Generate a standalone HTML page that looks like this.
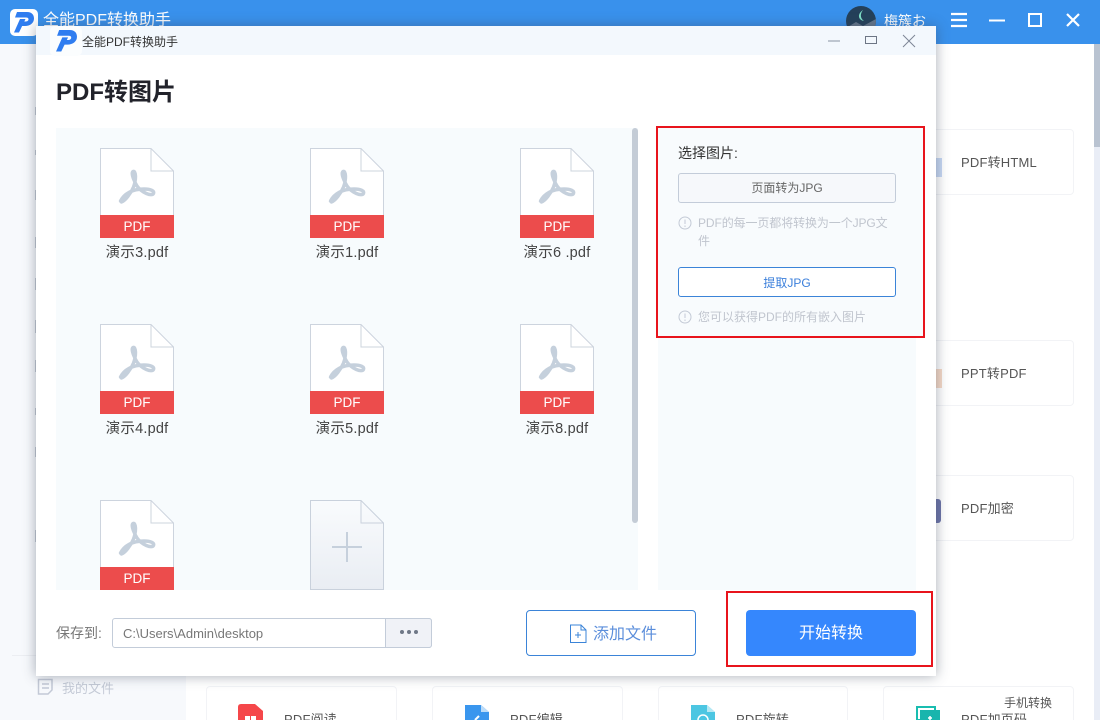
<!DOCTYPE html>
<html lang="zh"><head><meta charset="utf-8"><title>全能PDF转换助手</title>
<style>
*{box-sizing:border-box;margin:0;padding:0}
html,body{width:1100px;height:720px;overflow:hidden;background:#fff}
body{position:relative;font-family:"Liberation Sans","Noto Sans CJK SC",sans-serif;color:#333}
.a{position:absolute;white-space:nowrap}
.card{position:absolute;background:#fff;border:1px solid #f2f3f6;border-radius:4px}
.cardt{position:absolute;font-size:13px;letter-spacing:.2px;color:#555;line-height:16px;white-space:nowrap}
.fname{position:absolute;font-size:14.500px;letter-spacing:.2px;color:#444;line-height:18px;width:150px;text-align:center;white-space:nowrap}
.file{position:absolute;width:74px;height:90px}
.tick{position:absolute;left:35px;width:1px;background:#c2c8d2}
.pdf{position:absolute;width:74px;height:23px;text-align:center;color:#fff;font-size:13.500px;line-height:23px}
</style></head><body>
<div class="a" style="left:0;top:0;width:1100px;height:44px;background:#3991ec"></div>
<div class="a" style="left:0;top:44px;width:186px;height:676px;background:#f7f9fc"></div>
<div class="a" style="left:12px;top:655px;width:174px;height:1px;background:#eceef2"></div>
<div class="a" style="left:1094px;top:44px;width:6px;height:676px;background:#e9edf6"></div>
<div class="a" style="left:1094px;top:44px;width:6px;height:103px;background:#b9c3d1"></div>
<div class="tick" style="top:107px;height:8px"></div>
<div class="tick" style="top:150px;height:5px"></div>
<div class="tick" style="top:190px;height:10px"></div>
<div class="tick" style="top:237px;height:11px"></div>
<div class="tick" style="top:278px;height:12px"></div>
<div class="tick" style="top:320px;height:13px"></div>
<div class="tick" style="top:360px;height:12px"></div>
<div class="tick" style="top:408px;height:7px"></div>
<div class="tick" style="top:447px;height:10px"></div>
<div class="tick" style="top:530px;height:12px"></div>

<div class="a" style="left:10px;top:9px;width:28px;height:27px;background:#fff;border-radius:5px"></div>
<svg class="a" style="left:14px;top:12px" width="20" height="21" viewBox="0 0 20 21"><path d="M3 0H13C18 0 20 3 20 6.500C20 11 16 14 11 14H7L9.500 9.500H12C13.500 9.500 14.500 8.500 14.500 7.300C14.500 6 13.500 5.500 12 5.500H1Z" fill="#2f7df0"/><path d="M6 7H11.500L5 20.500H0Z" fill="#2f7df0"/></svg>
<div class="a" style="left:43px;top:11px;font-size:16px;line-height:20px;color:#fff">全能PDF转换助手</div>

<svg class="a" style="left:846px;top:6px" width="30" height="30" viewBox="0 0 30 30"><defs><clipPath id="av"><circle cx="15" cy="15" r="15"/></clipPath></defs><g clip-path="url(#av)"><rect width="30" height="30" fill="#24405a"/><path d="M0 22L10 16L17 20L30 13V30H0Z" fill="#65778c"/><path d="M17 4C11 8 12 14 18 15C14 12 14 8 17 4Z" fill="#7fe0c8"/></g></svg>
<div class="a" style="left:884px;top:11px;font-size:14px;line-height:20px;color:#fff">梅簇お</div>
<svg class="a" style="left:950px;top:12px" width="18" height="16"><path d="M1 2H17M1 8H17M1 14H17" stroke="#fff" stroke-width="2.200"/></svg>
<svg class="a" style="left:988px;top:12px" width="18" height="16"><path d="M1 8.500H17" stroke="#fff" stroke-width="2"/></svg>
<svg class="a" style="left:1027px;top:12px" width="16" height="16"><rect x="2" y="2" width="12" height="12" fill="none" stroke="#fff" stroke-width="2"/></svg>
<svg class="a" style="left:1065px;top:12px" width="16" height="16"><path d="M2 2L14 14M14 2L2 14" stroke="#fff" stroke-width="2.200"/></svg>

<div class="card" style="left:900px;top:129px;width:174px;height:66px"></div>
<div class="cardt" style="left:961px;top:155px">PDF转HTML</div>
<div class="card" style="left:900px;top:340px;width:174px;height:66px"></div>
<div class="cardt" style="left:961px;top:366px">PPT转PDF</div>
<div class="card" style="left:900px;top:475px;width:174px;height:66px"></div>
<div class="cardt" style="left:961px;top:501px">PDF加密</div>
<div class="a" style="left:936px;top:158px;width:6px;height:19px;background:#c7d8f3"></div>
<div class="a" style="left:936px;top:369px;width:6px;height:19px;background:#f6d9c6"></div>
<div class="a" style="left:936px;top:499px;width:5px;height:24px;background:#6c74a8;border-radius:0 3px 3px 0"></div>

<svg class="a" style="left:37px;top:678px" width="17" height="18"><path d="M1.500 1.500H15V12L11 16H1.500ZM5 6H12M5 10H12" fill="none" stroke="#c3c9d6" stroke-width="1.500"/></svg>
<div class="a" style="left:62px;top:680px;font-size:13px;line-height:18px;color:#c4cad6">我的文件</div>

<div class="card" style="left:206px;top:686px;width:191px;height:60px"></div>
<div class="card" style="left:432px;top:686px;width:191px;height:60px"></div>
<div class="card" style="left:658px;top:686px;width:190px;height:60px"></div>
<div class="card" style="left:883px;top:686px;width:191px;height:60px"></div>
<svg class="a" style="left:238px;top:704px" width="25" height="16"><path d="M3 0H17L25 7V16H0V3Q0 0 3 0Z" fill="#f5474a"/><path d="M7 12H12V16H7ZM13 12H18V16H13Z" fill="#fff"/></svg>
<svg class="a" style="left:465px;top:705px" width="24" height="15"><path d="M0 0H16L24 7V15H0Z" fill="#3a96ee"/><path d="M16 0L24 7H16Z" fill="#bcdcf8"/><path d="M10 15L14 11" stroke="#fff" stroke-width="2"/></svg>
<svg class="a" style="left:691px;top:705px" width="24" height="15"><path d="M0 0H16L24 7V15H0Z" fill="#4cc6e2"/><path d="M16 0L24 7H16Z" fill="#b6e9f4"/><circle cx="12" cy="15" r="5" fill="none" stroke="#fff" stroke-width="1.500"/></svg>
<svg class="a" style="left:916px;top:706px" width="24" height="14"><rect x="1" y="1" width="18" height="13" fill="none" stroke="#19bdb0" stroke-width="2"/><rect x="4" y="4" width="20" height="10" fill="#19b5ad"/><path d="M14 10V14M12 12H16" stroke="#fff" stroke-width="1.500"/></svg>
<div class="cardt" style="left:284px;top:712px">PDF阅读</div>
<div class="cardt" style="left:510px;top:712px">PDF编辑</div>
<div class="cardt" style="left:736px;top:712px">PDF旋转</div>
<div class="cardt" style="left:961px;top:712px">PDF加页码</div>
<div class="a" style="left:1004px;top:695px;font-size:12px;line-height:16px;color:#555">手机转换</div>

<!-- dialog -->
<div class="a" style="left:36px;top:26px;width:900px;height:650px;background:#fff;box-shadow:0 0 12px rgba(60,70,90,.45)"></div>
<div class="a" style="left:36px;top:26px;width:900px;height:29px;background:#f3f8fd"></div>
<div class="a" style="left:50px;top:26px;width:32px;height:30px;background:#fbfdfe;border-radius:5px"></div>
<svg class="a" style="left:56px;top:30px" width="21" height="22" viewBox="0 0 20 21"><path d="M3 0H13C18 0 20 3 20 6.500C20 11 16 14 11 14H7L9.500 9.500H12C13.500 9.500 14.500 8.500 14.500 7.300C14.500 6 13.500 5.500 12 5.500H1Z" fill="#2f7df0"/><path d="M6 7H11.500L5 20.500H0Z" fill="#2f7df0"/></svg>
<div class="a" style="left:82px;top:33px;font-size:12px;line-height:18px;color:#333">全能PDF转换助手</div>
<svg class="a" style="left:827px;top:33px" width="14" height="14"><path d="M1 8H13" stroke="#8a93a3" stroke-width="1"/></svg>
<svg class="a" style="left:864px;top:35px" width="14" height="11"><rect x="1.500" y="1.500" width="11" height="7" fill="none" stroke="#6d7685" stroke-width="1"/></svg>
<svg class="a" style="left:902px;top:34px" width="14" height="14"><path d="M1 1L13 13M13 1L1 13" stroke="#7d8696" stroke-width="1"/></svg>
<div class="a" style="left:56px;top:77px;font-size:24px;line-height:32px;font-weight:700;color:#22232b">PDF转图片</div>

<div class="a" style="left:56px;top:128px;width:582px;height:462px;background:#f7fbfd"></div>
<div class="a" style="left:632px;top:128px;width:6px;height:395px;background:#c4ccd6;border-radius:3px"></div>
<div class="a" style="left:658px;top:128px;width:258px;height:462px;background:#f7fbfd"></div>

<svg width="0" height="0" style="position:absolute"><defs>
<symbol id="f" viewBox="0 0 74 90"><path d="M.5 .5H51L73.500 23V89.500H.5Z" fill="#fff" stroke="#cdd4de"/><path d="M51 .5V23H73.500" fill="none" stroke="#cdd4de"/>
<path d="M20.500 53C24 46 32 41 44 41C51 41 54.500 43 53.500 45.500C51.500 48.500 42 45 37 38C33 31 31 25 33 23.500C36 22.500 36.500 31 33.500 39C30.500 46 25 53 21.500 54Z" fill="none" stroke="#c5d0dc" stroke-width="3.400" stroke-linejoin="round"/>
<rect y="67" width="74" height="23" fill="#ec4c4c"/></symbol></defs></svg>

<svg class="file" style="left:100px;top:148px"><use href="#f"/></svg>
<svg class="file" style="left:310px;top:148px"><use href="#f"/></svg>
<svg class="file" style="left:520px;top:148px"><use href="#f"/></svg>
<svg class="file" style="left:100px;top:324px"><use href="#f"/></svg>
<svg class="file" style="left:310px;top:324px"><use href="#f"/></svg>
<svg class="file" style="left:520px;top:324px"><use href="#f"/></svg>
<svg class="file" style="left:100px;top:500px"><use href="#f"/></svg>
<div class="pdf" style="left:100px;top:215px">PDF</div>
<div class="pdf" style="left:310px;top:215px">PDF</div>
<div class="pdf" style="left:520px;top:215px">PDF</div>
<div class="pdf" style="left:100px;top:391px">PDF</div>
<div class="pdf" style="left:310px;top:391px">PDF</div>
<div class="pdf" style="left:520px;top:391px">PDF</div>
<div class="pdf" style="left:100px;top:567px">PDF</div>
<div class="fname" style="left:62px;top:244px">演示3.pdf</div>
<div class="fname" style="left:272px;top:244px">演示1.pdf</div>
<div class="fname" style="left:482px;top:244px">演示6 .pdf</div>
<div class="fname" style="left:62px;top:420px">演示4.pdf</div>
<div class="fname" style="left:272px;top:420px">演示5.pdf</div>
<div class="fname" style="left:482px;top:420px">演示8.pdf</div>

<svg class="file" style="left:310px;top:500px"><defs><linearGradient id="g" x1="0" y1="0" x2="0" y2="1"><stop offset="0" stop-color="#f9fbfd"/><stop offset="1" stop-color="#e9edf3"/></linearGradient></defs><path d="M.5 .5H51L73.500 23V89.500H.5Z" fill="url(#g)" stroke="#c9d1dc"/><path d="M51 .5V23H73.500" fill="none" stroke="#c9d1dc"/><path d="M37 32V62M22 47H52" stroke="#c6d0dc" stroke-width="2"/></svg>

<!-- options -->
<div class="a" style="left:656px;top:126px;width:269px;height:212px;border:2px solid #e8141c;background:#f8fbfd"></div>
<div class="a" style="left:678px;top:144px;font-size:14px;line-height:18px;color:#333">选择图片:</div>
<div class="a" style="left:678px;top:173px;width:218px;height:30px;border:1px solid #c3ccd9;border-radius:3px;background:#f6f8fb;text-align:center;font-size:12px;line-height:29px;color:#666">页面转为JPG</div>
<svg class="a" style="left:678px;top:216px" width="14" height="14"><circle cx="7" cy="7" r="6" fill="none" stroke="#c3cad6"/><path d="M7 3.500V8M7 9.500V11" stroke="#c3cad6"/></svg>
<div class="a" style="left:698px;top:214px;width:194px;white-space:normal;font-size:12px;letter-spacing:-.1px;line-height:18px;color:#c0c5ce">PDF的每一页都将转换为一个JPG文件</div>
<div class="a" style="left:678px;top:267px;width:218px;height:30px;border:1px solid #3b84d8;border-radius:3px;background:#fff;text-align:center;font-size:12px;line-height:31px;color:#3b7fdb">提取JPG</div>
<svg class="a" style="left:678px;top:310px" width="14" height="14"><circle cx="7" cy="7" r="6" fill="none" stroke="#c3cad6"/><path d="M7 3.500V8M7 9.500V11" stroke="#c3cad6"/></svg>
<div class="a" style="left:698px;top:308px;font-size:12px;line-height:18px;color:#c0c5ce">您可以获得PDF的所有嵌入图片</div>

<!-- bottom -->
<div class="a" style="left:56px;top:624px;font-size:14px;line-height:18px;color:#777">保存到:</div>
<div class="a" style="left:112px;top:618px;width:320px;height:30px;border:1px solid #c3ccd9;border-radius:3px;background:#fff"></div>
<div class="a" style="left:385px;top:618px;width:47px;height:30px;border:1px solid #c3ccd9;border-radius:0 3px 3px 0;background:#f0f2f7"></div>
<div class="a" style="left:123px;top:625px;font-size:13px;line-height:17px;color:#777">C:\Users\Admin\desktop</div>
<svg class="a" style="left:399px;top:628px" width="20" height="8"><circle cx="3" cy="4" r="2" fill="#6f7887"/><circle cx="10" cy="4" r="2" fill="#6f7887"/><circle cx="17" cy="4" r="2" fill="#6f7887"/></svg>
<div class="a" style="left:526px;top:610px;width:170px;height:46px;border:1px solid #3b84d8;border-radius:4px;background:#fff"></div>
<svg class="a" style="left:569px;top:624px" width="19" height="20"><path d="M1.500 1H12L17 6V18.500H1.500Z" fill="none" stroke="#3b84d8"/><path d="M12 1V6H17M9 8V14M6 11H12" fill="none" stroke="#3b84d8"/></svg>
<div class="a" style="left:593px;top:624px;font-size:16px;line-height:22px;color:#5b8edb">添加文件</div>
<div class="a" style="left:726px;top:591px;width:207px;height:76px;border:2px solid #e8141c"></div>
<div class="a" style="left:746px;top:610px;width:170px;height:46px;border-radius:4px;background:#3587fd;color:#fff;text-align:center;font-size:16px;line-height:48px">开始转换</div>
</body></html>
